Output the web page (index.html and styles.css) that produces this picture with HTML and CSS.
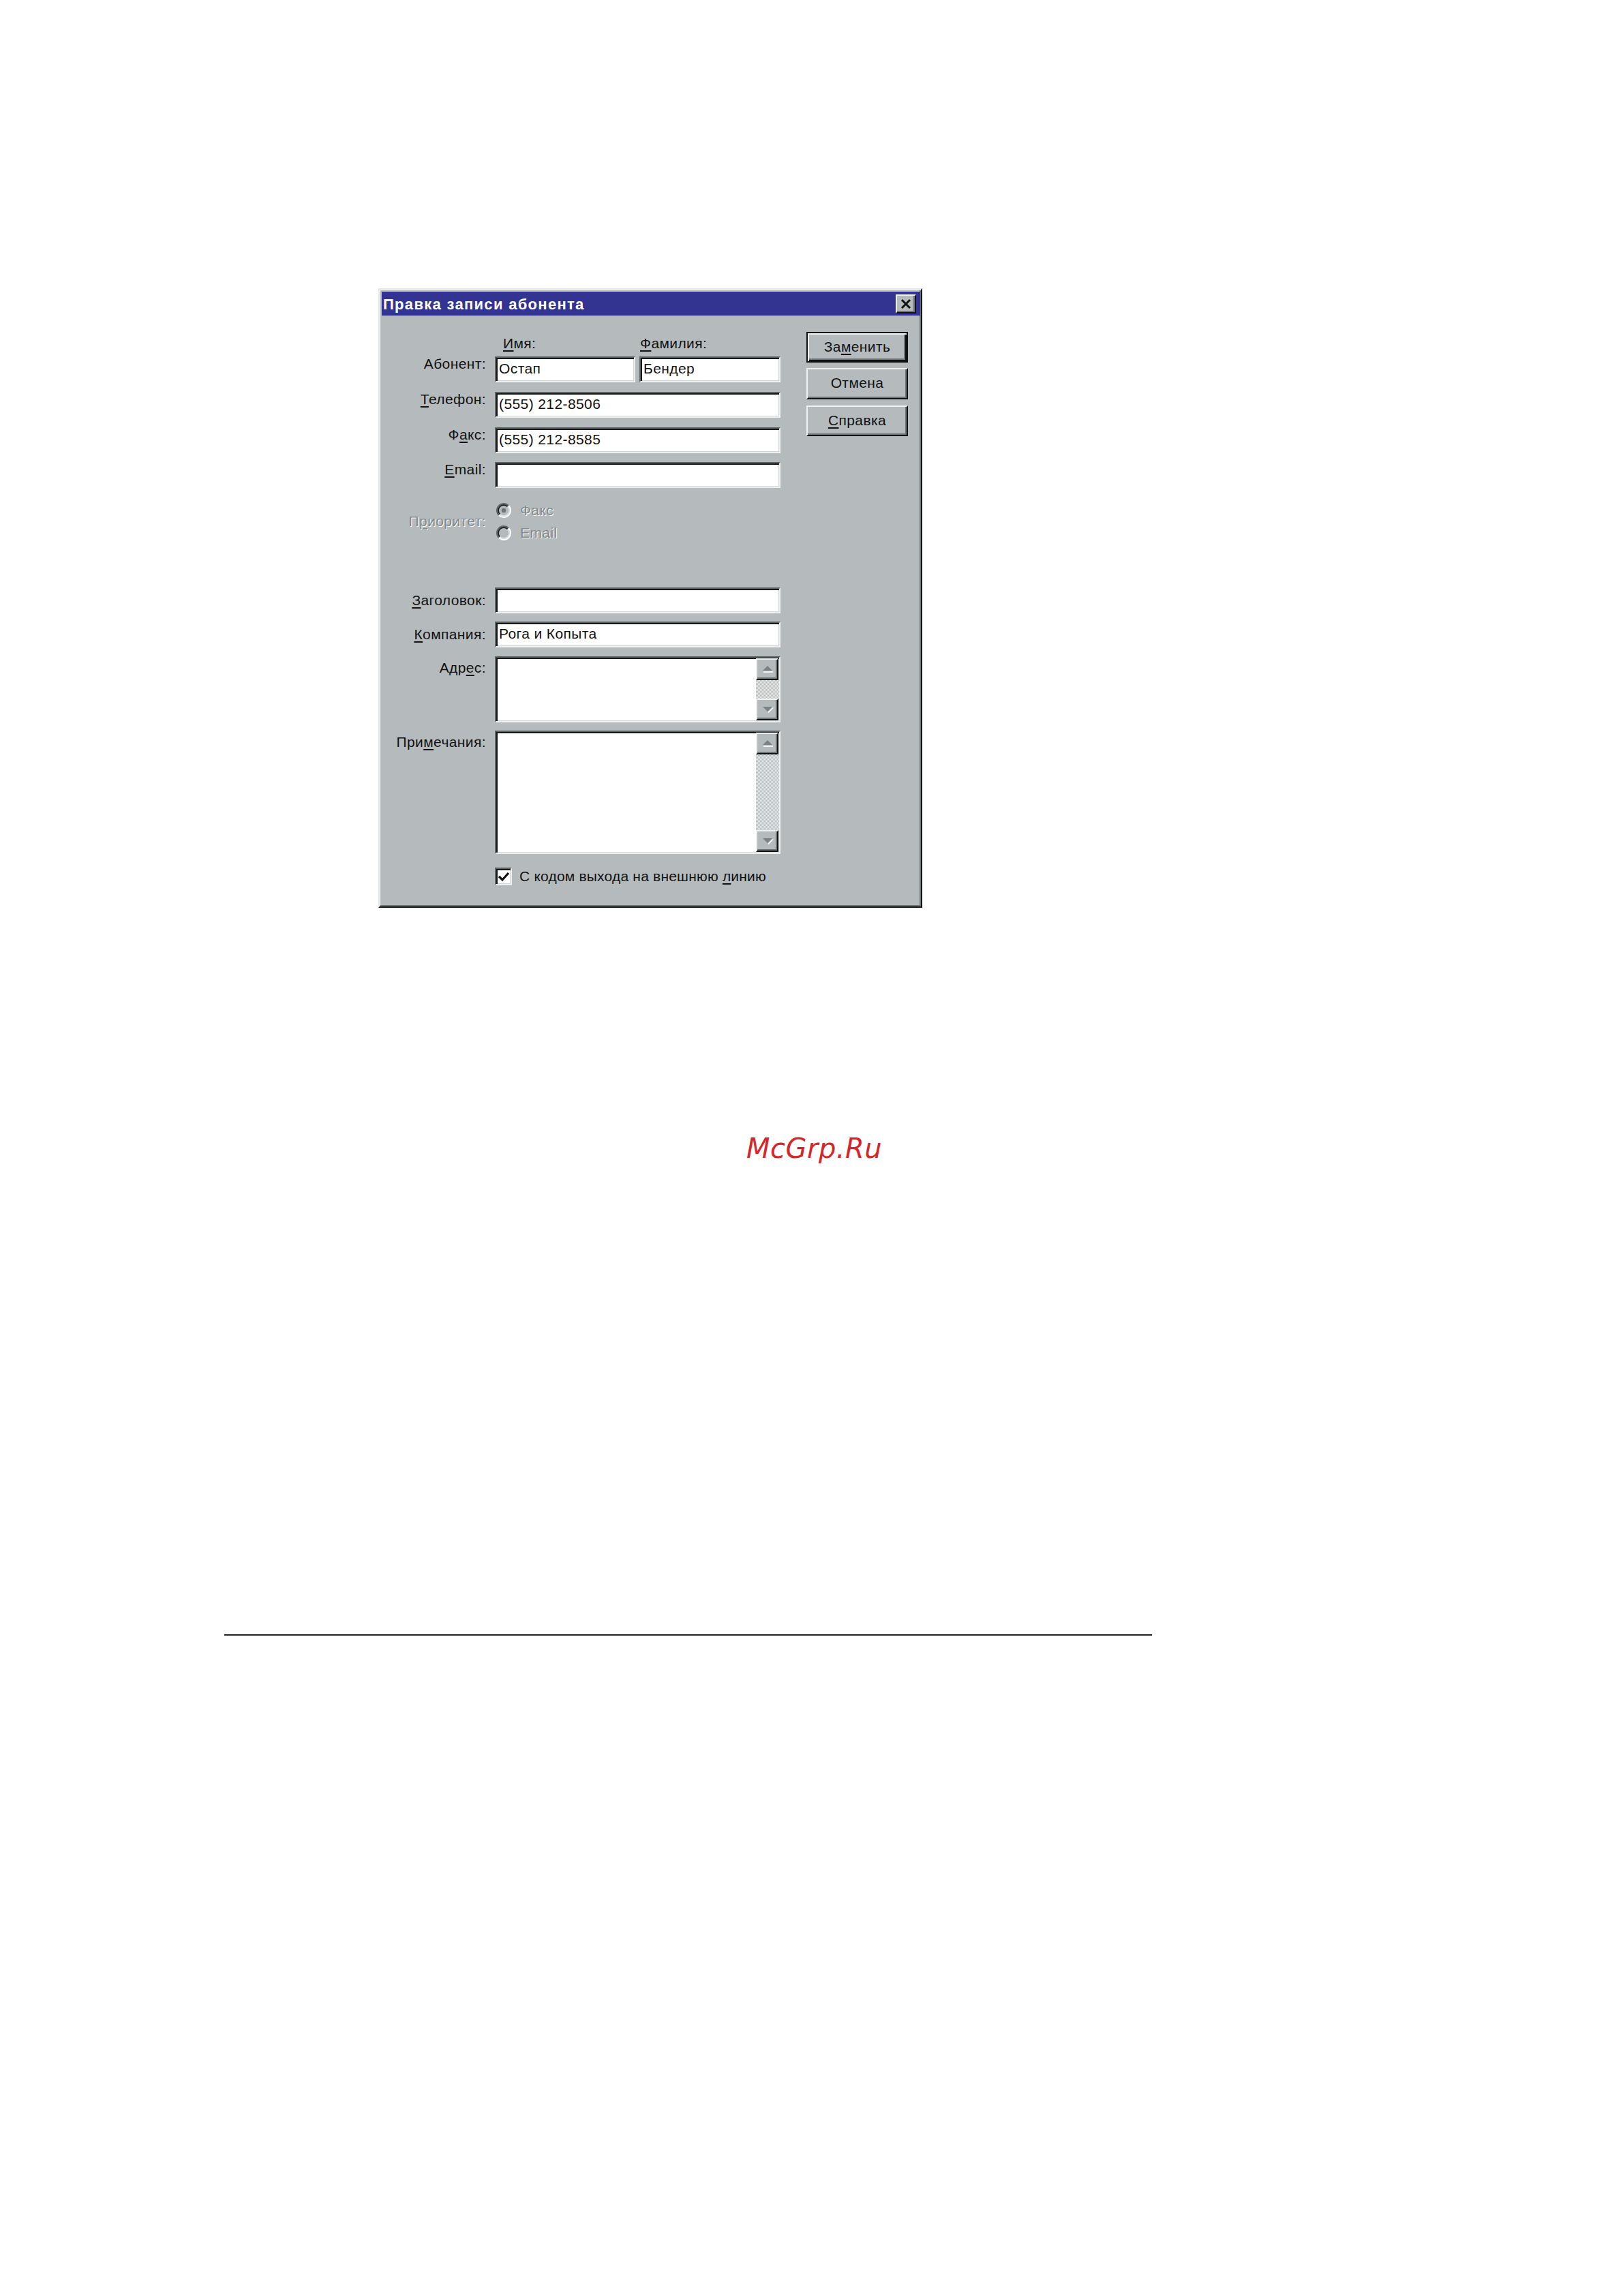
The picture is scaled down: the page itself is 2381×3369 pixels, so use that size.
FILE: index.html
```html
<!DOCTYPE html>
<html lang="ru">
<head>
<meta charset="utf-8">
<title>Правка записи абонента</title>
<link rel="stylesheet" href="styles.css">
</head>
<body>
<div class="page">
  <div class="dialog">
    <div class="titlebar">
      <span class="title">Правка записи абонента</span>
      <div class="close raised">
        <svg width="22" height="20" viewBox="0 0 22 20"><path d="M5 4 L17 16 M17 4 L5 16" stroke="#111" stroke-width="3" fill="none"/></svg>
      </div>
    </div>
    <div class="content">
      <div class="form">
        <div class="row row-head">
          <div class="label"></div>
          <div class="field split">
            <span class="colhead colhead-first"><u>И</u>мя:</span>
            <span class="colhead colhead-second"><u>Ф</u>амилия:</span>
          </div>
        </div>
        <div class="row row-top r1">
          <div class="label">Абонент:</div>
          <div class="field split">
            <div class="input sunken half-a">Остап</div>
            <div class="input sunken half-b">Бендер</div>
          </div>
        </div>
        <div class="row row-top r2">
          <div class="label"><u>Т</u>елефон:</div>
          <div class="field"><div class="input sunken">(555) 212-8506</div></div>
        </div>
        <div class="row row-top r3">
          <div class="label">Ф<u>а</u>кс:</div>
          <div class="field"><div class="input sunken">(555) 212-8585</div></div>
        </div>
        <div class="row row-top r4">
          <div class="label"><u>E</u>mail:</div>
          <div class="field"><div class="input sunken"></div></div>
        </div>
        <div class="row row-priority">
          <div class="label disabled">П<u>р</u>иоритет:</div>
          <div class="field radios">
            <div class="radio">
              <svg width="24" height="24" viewBox="0 0 24 24">
                <circle cx="12" cy="12" r="9" fill="#b5bbbc"/>
                <path d="M4.93 19.07 A10 10 0 0 1 19.07 4.93" stroke="#5f6566" stroke-width="2.2" fill="none"/>
                <path d="M19.07 4.93 A10 10 0 0 1 4.93 19.07" stroke="#ffffff" stroke-width="2.2" fill="none"/>
                <path d="M6.34 17.66 A8 8 0 0 1 17.66 6.34" stroke="#1e2222" stroke-width="1.8" fill="none"/>
                <path d="M17.66 6.34 A8 8 0 0 1 6.34 17.66" stroke="#d9dddd" stroke-width="1.8" fill="none"/>
                <circle cx="12" cy="12" r="3.2" fill="#6f7677"/>
              </svg>
              <span class="disabled">Факс</span>
            </div>
            <div class="radio">
              <svg width="24" height="24" viewBox="0 0 24 24">
                <circle cx="12" cy="12" r="9" fill="#b5bbbc"/>
                <path d="M4.93 19.07 A10 10 0 0 1 19.07 4.93" stroke="#5f6566" stroke-width="2.2" fill="none"/>
                <path d="M19.07 4.93 A10 10 0 0 1 4.93 19.07" stroke="#ffffff" stroke-width="2.2" fill="none"/>
                <path d="M6.34 17.66 A8 8 0 0 1 17.66 6.34" stroke="#1e2222" stroke-width="1.8" fill="none"/>
                <path d="M17.66 6.34 A8 8 0 0 1 6.34 17.66" stroke="#d9dddd" stroke-width="1.8" fill="none"/>
              </svg>
              <span class="disabled">Email</span>
            </div>
          </div>
        </div>
        <div class="row row-mid r5">
          <div class="label"><u>З</u>аголовок:</div>
          <div class="field"><div class="input sunken"></div></div>
        </div>
        <div class="row row-mid r6">
          <div class="label"><u>К</u>омпания:</div>
          <div class="field"><div class="input sunken">Рога и Копыта</div></div>
        </div>
        <div class="row row-area r7">
          <div class="label">Адр<u>е</u>с:</div>
          <div class="field">
            <div class="textarea sunken ta-address">
              <div class="ta-body"></div>
              <div class="scroll">
                <div class="sbtn raised">
                  <svg width="18" height="12" viewBox="0 0 18 12"><path d="M2 8 L16 8 L9 1 Z" fill="#7b8283"/><path d="M3 10 H17" stroke="#fff" stroke-width="1.6"/></svg>
                </div>
                <div class="strack"></div>
                <div class="sbtn raised">
                  <svg width="18" height="12" viewBox="0 0 18 12"><path d="M2 2 L16 2 L9 9 Z" fill="#7b8283"/><path d="M10 10.5 L17 3.5" stroke="#fff" stroke-width="1.6"/></svg>
                </div>
              </div>
            </div>
          </div>
        </div>
        <div class="row row-area r8">
          <div class="label">При<u>м</u>ечания:</div>
          <div class="field">
            <div class="textarea sunken ta-notes">
              <div class="ta-body"></div>
              <div class="scroll">
                <div class="sbtn raised">
                  <svg width="18" height="12" viewBox="0 0 18 12"><path d="M2 8 L16 8 L9 1 Z" fill="#7b8283"/><path d="M3 10 H17" stroke="#fff" stroke-width="1.6"/></svg>
                </div>
                <div class="strack"></div>
                <div class="sbtn raised">
                  <svg width="18" height="12" viewBox="0 0 18 12"><path d="M2 2 L16 2 L9 9 Z" fill="#7b8283"/><path d="M10 10.5 L17 3.5" stroke="#fff" stroke-width="1.6"/></svg>
                </div>
              </div>
            </div>
          </div>
        </div>
        <div class="row row-check">
          <div class="label"></div>
          <div class="field check">
            <div class="checkbox sunken">
              <svg width="20" height="20" viewBox="0 0 20 20"><path d="M3 9 L8 14 L17 4" stroke="#111" stroke-width="3.2" fill="none"/></svg>
            </div>
            <span class="check-text">С кодом выхода на внешнюю <u>л</u>инию</span>
          </div>
        </div>
      </div>
      <div class="buttons">
        <div class="btn default">За<u>м</u>енить</div>
        <div class="btn raised b2">Отмена</div>
        <div class="btn raised b3"><u>С</u>правка</div>
      </div>
    </div>
  </div>
  <div class="watermark">McGrp.Ru</div>
  <div class="rule"></div>
</div>
</body>
</html>
```
FILE: styles.css
```css
* { box-sizing: border-box; }
html, body { margin: 0; padding: 0; background: #ffffff; }
body { font-family: "Liberation Sans", Arial, sans-serif; color: #111; }
.page { width: 2381px; min-height: 3369px; padding-top: 423px; }

.dialog {
  margin-left: 555px;
  width: 798px;
  height: 909px;
  background: #b5bbbc;
  border: 2px solid;
  border-color: #e4e7e7 #141616 #141616 #e4e7e7;
  box-shadow: inset 1px 1px 0 #ffffff, inset -2px -2px 0 #6f7576;
  padding: 3px 1px 0 3px;
  display: flex;
  flex-direction: column;
}

.titlebar {
  height: 35px;
  background: #333392;
  display: flex;
  align-items: center;
  justify-content: space-between;
  padding: 0 6px 0 2px;
}
.title {
  color: #ffffff;
  font-weight: bold;
  font-size: 22px;
  letter-spacing: 1.3px;
  line-height: 35px;
  padding-top: 1px;
}
.raised {
  background: #b5bbbc;
  border: 2px solid;
  border-color: #eef0f0 #121414 #121414 #eef0f0;
  box-shadow: inset -2px -2px 0 #6f7576;
}
.close {
  width: 30px;
  height: 28px;
  display: flex;
  align-items: center;
  justify-content: center;
}

.content {
  flex: 1;
  display: flex;
  font-size: 21px;
  letter-spacing: 0.4px;
}
.form { width: 585px; display: flex; flex-direction: column; }

.row { display: flex; column-gap: 13px; }
.label { width: 153px; flex: none; text-align: right; line-height: 20px; white-space: nowrap; }
.field { width: 419px; flex: none; }
u { text-decoration-thickness: 2px; text-underline-offset: 3px; }

.row-head { margin-top: 29px; height: 24px; }
.split { display: flex; column-gap: 6px; }
.colhead { line-height: 24px; }
.colhead-first { width: 206px; padding-left: 12px; }
.colhead-second { padding-left: 1px; }

.row-top .label { padding-top: 1px; }
.r1 { margin-top: 7px; }
.r2 { margin-top: 14px; }
.r3 { margin-top: 14px; }
.r4 { margin-top: 13px; }

.sunken {
  background: #ffffff;
  border: 2px solid;
  border-color: #5d6364 #eef0f0 #eef0f0 #5d6364;
  box-shadow: inset 2px 2px 0 #161818, inset -1px -1px 0 #d3d7d8;
}
.input {
  height: 38px;
  width: 100%;
  display: flex;
  align-items: center;
  padding: 0 4px 3px 4px;
  white-space: nowrap;
}
.half-a { width: 206px; }
.half-b { width: 207px; }

.disabled { color: #838a8c; text-shadow: 1px 1px 0 #ffffff; }
.row-priority { margin-top: 16px; height: 66px; align-items: center; }
.radios { display: flex; flex-direction: column; }
.radio { height: 33px; display: flex; align-items: center; column-gap: 12px; padding-left: 1px; }
.radio svg { flex: none; }

.row-mid { align-items: center; }
.r5 { margin-top: 64px; }
.r6 { margin-top: 12px; }

.row-area .label { padding-top: 7px; }
.r7 { margin-top: 13px; }
.r8 { margin-top: 12px; }
.textarea { display: flex; width: 100%; padding: 0; }
.ta-address { height: 97px; }
.ta-notes { height: 181px; }
.ta-body { flex: 1; }
.scroll {
  width: 33px;
  display: flex;
  flex-direction: column;
  margin: 1px 1px 1px 0;
  background: repeating-conic-gradient(#eceeee 0 25%, #b5bbbc 0 50%) 0 0 / 2px 2px;
}
.sbtn {
  height: 32px;
  flex: none;
  display: flex;
  align-items: center;
  justify-content: center;
}
.strack { flex: 1; }

.row-check { margin-top: 20px; }
.check { display: flex; align-items: center; column-gap: 11px; height: 26px; }
.checkbox {
  width: 25px;
  height: 26px;
  flex: none;
  display: flex;
  align-items: center;
  justify-content: center;
  padding: 1px 0 0 1px;
}
.check-text { white-space: nowrap; letter-spacing: 0.2px; }

.buttons {
  margin-left: 38px;
  width: 149px;
  display: flex;
  flex-direction: column;
  padding-top: 24px;
}
.btn {
  height: 45px;
  display: flex;
  align-items: center;
  justify-content: center;
  padding-bottom: 2px;
}
.default {
  background: #b5bbbc;
  border: 2px solid #101111;
  box-shadow: inset 2px 2px 0 #f3f4f4, inset -2px -2px 0 #101111, inset -4px -4px 0 #6f7576;
}
.b2 { margin-top: 8px; height: 46px; }
.b3 { margin-top: 9px; }

.watermark {
  margin-top: 329px;
  padding-left: 1095px;
  font-family: "DejaVu Sans", sans-serif;
  font-style: oblique;
  font-size: 40px;
  line-height: 48px;
  color: #d3272b;
  letter-spacing: 0.5px;
}
.rule {
  margin-top: 689px;
  margin-left: 329px;
  width: 1361px;
  height: 2px;
  background: #231f20;
}
```
